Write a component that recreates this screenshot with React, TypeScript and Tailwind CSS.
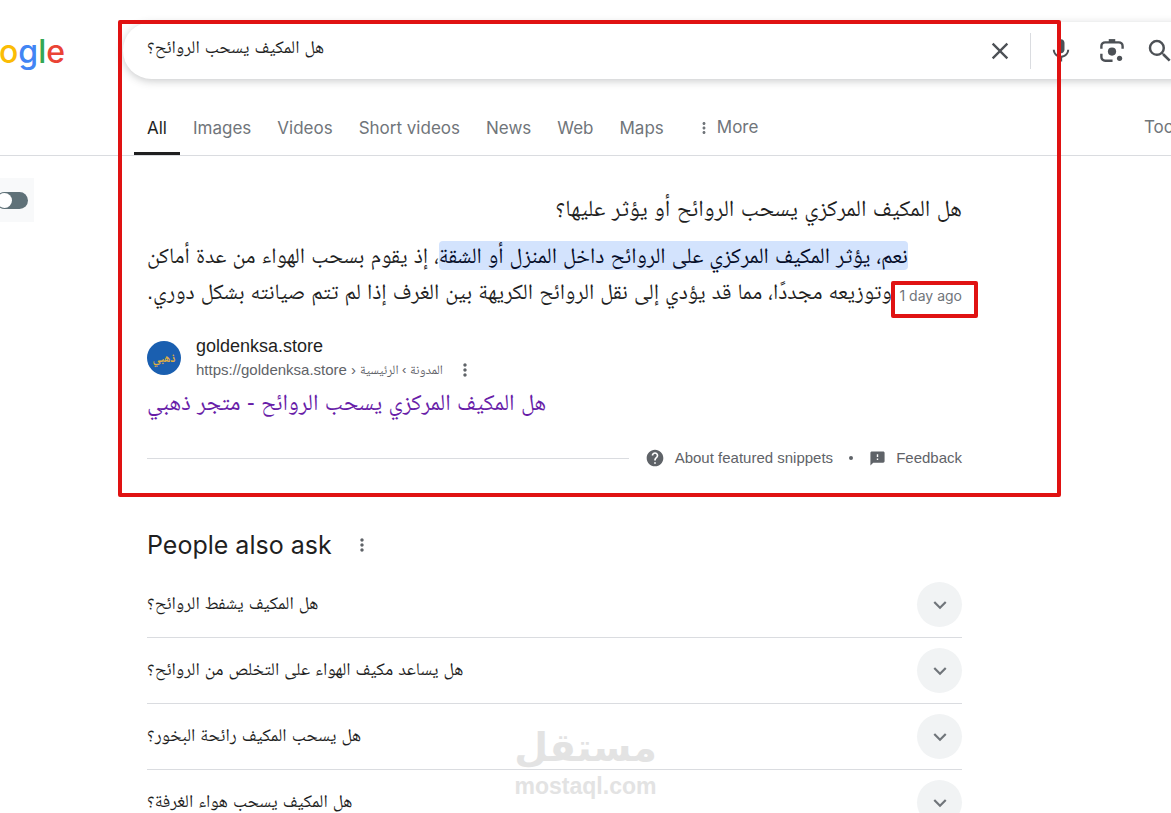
import React, { useState } from 'react';
import { clsx } from 'clsx';
import { MdClose, MdMic, MdSearch, MdMoreVert, MdHelp, MdFeedback, MdExpandMore } from 'react-icons/md';

const TABS = ['All', 'Images', 'Videos', 'Short videos', 'News', 'Web', 'Maps'];

const QUESTIONS = [
  'هل المكيف يشفط الروائح؟',
  'هل يساعد مكيف الهواء على التخلص من الروائح؟',
  'هل يسحب المكيف رائحة البخور؟',
  'هل المكيف يسحب هواء الغرفة؟',
];

const LensIcon: React.FC = () => (
  <svg width="26" height="26" viewBox="0 0 24 24" fill="none" stroke="currentColor" strokeWidth="2.2" aria-hidden="true">
    <path d="M2.200 10V7.500A3.500 3.500 0 0 1 5.700 4h12.600a3.500 3.500 0 0 1 3.500 3.500V10" />
    <path d="M2.200 14.500v3a3.500 3.500 0 0 0 3.500 3.500H12.500" />
    <path d="M9 2.500h6" strokeWidth="3" />
    <circle cx="12" cy="12.500" r="3.800" fill="currentColor" stroke="none" />
    <circle cx="19" cy="18.800" r="2.400" fill="currentColor" stroke="none" />
  </svg>
);

const Logo: React.FC = () => (
  <a
    href="#home"
    aria-label="Google"
    className="flex w-[65px] shrink-0 justify-end overflow-hidden font-['Inter','Liberation_Sans',sans-serif] text-[32px] leading-[59px] font-medium"
  >
    <span className="text-[#4285f4]">G</span>
    <span className="text-[#ea4335]">o</span>
    <span className="text-[#fbbc05]">o</span>
    <span className="text-[#4285f4]">g</span>
    <span className="text-[#34a853]">l</span>
    <span className="text-[#ea4335]">e</span>
  </a>
);

const SearchHeader: React.FC = () => {
  const [query, setQuery] = useState('هل المكيف يسحب الروائح؟');

  return (
    <header className="flex h-[79px] pt-[22px]">
      <Logo />
      <form
        onSubmit={e => e.preventDefault()}
        className="-mr-12 ml-[58px] flex h-[57px] flex-1 items-center rounded-full bg-white pr-12 pl-6 text-[#4d5156] shadow-[0_2px_8px_rgba(60,64,67,0.28)]"
      >
        <input
          dir="rtl"
          aria-label="Search"
          value={query}
          onChange={e => setQuery(e.target.value)}
          className="h-11 min-w-0 flex-1 bg-transparent pb-1 text-left text-lg text-[#1f1f1f] outline-none"
        />
        <button type="button" aria-label="Clear" onClick={() => setQuery('')} className="mr-4 shrink-0">
          <MdClose size={28} />
        </button>
        <span className="h-9 w-px shrink-0 bg-[#dadce0]" />
        <button type="button" aria-label="Search by voice" className="ml-4 shrink-0"><MdMic size={28} /></button>
        <button type="button" aria-label="Search by image" className="ml-6 shrink-0"><LensIcon /></button>
        <button type="submit" aria-label="Search" className="-mr-1 ml-5 shrink-0"><MdSearch size={30} /></button>
      </form>
    </header>
  );
};

const TabBar: React.FC = () => {
  const [active, setActive] = useState('All');

  return (
    <nav className="mt-[22px] flex border-b border-[#dadce0] pl-[134px] font-['Inter','Liberation_Sans',sans-serif] text-[17px] whitespace-nowrap text-[#70757a]">
      {TABS.map(tab => (
        <a
          key={tab}
          href="#results"
          onClick={() => setActive(tab)}
          className={clsx(
            'border-b-3 px-[13px] pt-3.5 pb-2.5 leading-[27px]',
            tab === active ? 'border-[#1f1f1f] text-[#1f1f1f]' : 'border-transparent'
          )}
        >
          {tab}
        </a>
      ))}
      <button className="ml-[18px] flex items-center gap-1">
        <MdMoreVert size={18} /> More
      </button>
      <button className="-mr-4 ml-auto">Tools</button>
    </nav>
  );
};

const FeaturedSnippet: React.FC = () => (
  <section className="flex flex-col">
    <h2 dir="rtl" className="text-[23px] leading-9 text-[#1f1f1f]">هل المكيف المركزي يسحب الروائح أو يؤثر عليها؟</h2>

    <div className="mt-3 text-[22px] leading-9 whitespace-nowrap text-[#1f1f1f]">
      <p dir="rtl" className="w-fit">
        <mark className="rounded-sm bg-[#d3e3fd] py-0.5 text-[#040c28]">نعم، يؤثر المكيف المركزي على الروائح داخل المنزل أو الشقة</mark>
        ، إذ يقوم بسحب الهواء من عدة أماكن
      </p>
      <div className="flex justify-between">
        <p dir="rtl">وتوزيعه مجددًا، مما قد يؤدي إلى نقل الروائح الكريهة بين الغرف إذا لم تتم صيانته بشكل دوري.</p>
        <span className="relative font-['Inter','Liberation_Sans',sans-serif] text-sm leading-[44px] text-[#70757a]">
          1 day ago
          <span className="absolute top-[7px] -right-4 -left-2 h-[37px] rounded-xs border-4 border-[#e01212]" />
        </span>
      </div>
    </div>

    <div className="mt-4 flex items-center gap-[15px]">
      <div className="flex size-[34px] items-center justify-center rounded-full bg-[#1a5fb0] text-xs font-bold text-[#e0b040]">ذهبي</div>
      <div>
        <div className="text-lg leading-6 text-[#1f1f1f]">goldenksa.store</div>
        <div className="flex items-center gap-1 text-[15px] leading-6 text-[#5f6368]">
          <cite className="not-italic">https://goldenksa.store</cite>
          <span>›</span>
          <span dir="rtl" className="text-[13px]">المدونة › الرئيسية</span>
          <button aria-label="About this result" className="ml-2"><MdMoreVert size={20} /></button>
        </div>
      </div>
    </div>
    <h3 className="text-[23px] leading-10 text-[#681da8]">
      <a href="#goldenksa" dir="rtl" className="inline-block">هل المكيف المركزي يسحب الروائح - متجر ذهبي</a>
    </h3>

    <div className="mt-6 flex items-center text-[15px] leading-6 text-[#5f6368]">
      <span className="mr-4 h-px flex-1 bg-[#dadce0]" />
      <a href="#about" className="flex items-center gap-2.5"><MdHelp size={20} /> About featured snippets</a>
      <span className="mx-4 size-1 rounded-full bg-[#5f6368]" />
      <button className="flex items-center gap-2.5"><MdFeedback size={17} /> Feedback</button>
    </div>
  </section>
);

const PeopleAlsoAsk: React.FC = () => (
  <section className="mt-[55px]">
    <div className="flex items-center gap-5 text-[#1f1f1f]">
      <h2 className="font-['Inter','Liberation_Sans',sans-serif] text-[25px] leading-10">People also ask</h2>
      <button aria-label="About this section" className="text-[#5f6368]"><MdMoreVert size={20} /></button>
    </div>
    <ul className="mt-[7px]">
      {QUESTIONS.map(q => (
        <li key={q} className="border-b border-[#dadce0]">
          <button className="flex h-[65px] w-full items-center justify-between">
            <span dir="rtl" className="pb-1 text-lg text-[#1f1f1f]">{q}</span>
            <span className="flex size-[45px] items-center justify-center rounded-full bg-[#f1f3f4] text-[#70757a]">
              <MdExpandMore size={26} />
            </span>
          </button>
        </li>
      ))}
    </ul>
  </section>
);

const App: React.FC = () => (
  <div className="relative h-screen overflow-hidden bg-white font-['Liberation_Sans','Noto_Naskh_Arabic','DejaVu_Sans',sans-serif]">
    <SearchHeader />
    <TabBar />

    <div className="flex">
      <aside className="w-[147px] shrink-0 pt-[22px]">
        <label className="flex h-11 w-[34px] items-center justify-end bg-[#f8f9fa] pr-1.5">
          <input
            type="checkbox"
            aria-label="Toggle panel"
            className="h-[17px] w-8 shrink-0 appearance-none rounded-full bg-[#5f7178] before:mt-px before:ml-px before:block before:size-[15px] before:rounded-full before:bg-white"
          />
        </label>
      </aside>
      <main className="max-w-[815px] flex-1 pt-[34px]">
        <FeaturedSnippet />
        <PeopleAlsoAsk />
      </main>
    </div>

    {/* highlight frame around the featured snippet */}
    <div className="pointer-events-none absolute top-5 left-[118px] h-[477px] w-[943px] rounded-xs border-4 border-[#e01212]" />

    <div className="pointer-events-none absolute top-[722px] left-1/2 flex -translate-x-1/2 flex-col items-center font-bold text-[#e3e3e3]">
      <span className="font-['DejaVu_Sans',sans-serif] text-[39px] leading-[52px]">مستقل</span>
      <span className="text-[23px] leading-6">mostaql.com</span>
    </div>
  </div>
);

export default App;
